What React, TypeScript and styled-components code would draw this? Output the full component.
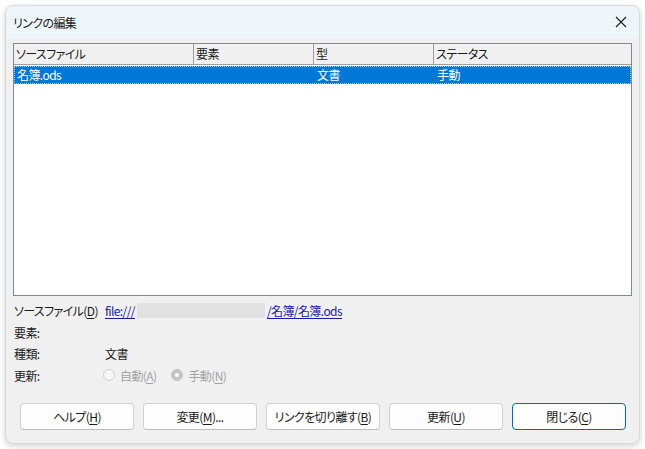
import React from 'react';
import styled, { createGlobalStyle } from 'styled-components';

const GlobalStyle = createGlobalStyle`
    html, body {
        margin: 0;
        padding: 0;
        background: #ffffff;
    }
    body {
        font-family: "Noto Sans CJK JP", "Noto Sans", sans-serif;
        font-size: 12px;
        color: #1a1a1a;
        font-feature-settings: "palt";
        letter-spacing: -0.6px;
        white-space: nowrap;
    }
`;

const Window = styled.div`
    margin: 5px;
    width: 635px;
    height: 439px;
    box-sizing: border-box;
    border-radius: 8px;
    border: 1px solid #d6d9dc;
    background: #f0f0f0;
    box-shadow: 0 2px 6px rgba(0, 0, 0, 0.18);
    overflow: hidden;
    display: flex;
    flex-direction: column;
`;

const TitleBar = styled.div`
    height: 32px;
    display: flex;
    align-items: center;
    justify-content: space-between;
    padding: 0 10px 0 7px;
    background: #eef5f9;
`;

const Title = styled.span`
    font-size: 12px;
    color: #1b1b1b;
`;

const CloseButton = styled.div`
    width: 16px;
    height: 16px;
    display: flex;
    align-items: center;
    justify-content: center;
`;

const Body = styled.div`
    flex: 1;
    display: flex;
    flex-direction: column;
    padding: 5px 7px 0 7px;
`;

const ListBox = styled.div`
    height: 253px;
    box-sizing: border-box;
    border: 1px solid #828790;
    background: #ffffff;
    display: flex;
    flex-direction: column;
`;

const HeaderRow = styled.div`
    display: grid;
    grid-template-columns: 180px 120px 120px 1fr;
    height: 20px;
    border-bottom: 1px solid #a0a0a0;
    background: #f0f0f0;
`;

const HeaderCell = styled.div<{ $last?: boolean }>`
    display: flex;
    align-items: center;
    padding-left: 2px;
    border-right: ${(p) => (p.$last ? 'none' : '1px solid #a0a0a0')};
    color: #1a1a1a;
    line-height: 1;
`;

const DataRow = styled.div<{ $selected?: boolean }>`
    display: grid;
    grid-template-columns: 180px 120px 120px 1fr;
    height: 18px;
    margin-top: 1px;
    box-sizing: border-box;
    background: ${(p) => (p.$selected ? '#0078d7' : 'transparent')};
    color: ${(p) => (p.$selected ? '#ffffff' : '#1a1a1a')};
    outline: ${(p) => (p.$selected ? '1px dotted #b8c7d8' : 'none')};
    outline-offset: -1px;
`;

const DataCell = styled.div`
    display: flex;
    align-items: center;
    padding-left: 3px;
    line-height: 1;
`;

const InfoGrid = styled.div`
    display: grid;
    grid-template-columns: 91px 1fr;
    grid-template-rows: 21px 22px 21px 22px;
    align-items: center;
    margin-top: 4px;
    padding-left: 1px;
`;

const Label = styled.span`
    color: #1a1a1a;
`;

const LinkText = styled.span`
    display: inline-flex;
    align-items: center;
    color: #1a1aa6;
    text-decoration: underline;
    text-underline-offset: 2px;
`;

const Redacted = styled.span`
    display: inline-block;
    width: 128px;
    height: 15px;
    background: #e1e1e1;
    margin: 0 2px;
`;

const RadioGroup = styled.div`
    display: flex;
    align-items: center;
    gap: 15px;
    margin-left: -2px;
`;

const RadioItem = styled.span`
    display: inline-flex;
    align-items: center;
    gap: 5px;
    color: #a3a3a3;
`;

const RadioCircle = styled.span<{ $checked?: boolean }>`
    width: 12px;
    height: 12px;
    box-sizing: border-box;
    border-radius: 50%;
    border: 1px solid ${(p) => (p.$checked ? '#c4c4c4' : '#cfcfcf')};
    background: ${(p) => (p.$checked ? '#c4c4c4' : '#f7f7f7')};
    display: inline-flex;
    align-items: center;
    justify-content: center;

    &::after {
        content: '';
        display: ${(p) => (p.$checked ? 'block' : 'none')};
        width: 4px;
        height: 4px;
        border-radius: 50%;
        background: #ffffff;
    }
`;

const U = styled.span`
    text-decoration: underline;
    text-underline-offset: 2px;
`;

const ButtonRow = styled.div`
    display: flex;
    gap: 9px;
    margin-top: 17px;
    padding: 0 6px 0 7px;
`;

const Button = styled.div<{ $default?: boolean }>`
    width: 114px;
    height: 27px;
    box-sizing: border-box;
    border-radius: 4px;
    background: #fdfdfd;
    border: 1px solid ${(p) => (p.$default ? '#0067c0' : '#d0d0d0')};
    border-bottom-color: ${(p) => (p.$default ? '#0067c0' : '#bcbcbc')};
    display: flex;
    align-items: center;
    justify-content: center;
    color: #1a1a1a;
`;

function App() {
    return (
        <>
            <GlobalStyle />
            <Window>
                <TitleBar>
                    <Title>リンクの編集</Title>
                    <CloseButton>
                        <svg width="12" height="12" viewBox="0 0 12 12">
                            <path d="M1 1 L11 11 M11 1 L1 11" stroke="#1a1a1a" strokeWidth="1.1" />
                        </svg>
                    </CloseButton>
                </TitleBar>
                <Body>
                    <ListBox>
                        <HeaderRow>
                            <HeaderCell>ソースファイル</HeaderCell>
                            <HeaderCell>要素</HeaderCell>
                            <HeaderCell>型</HeaderCell>
                            <HeaderCell $last>ステータス</HeaderCell>
                        </HeaderRow>
                        <DataRow $selected>
                            <DataCell>名簿.ods</DataCell>
                            <DataCell />
                            <DataCell>文書</DataCell>
                            <DataCell>手動</DataCell>
                        </DataRow>
                    </ListBox>
                    <InfoGrid>
                        <Label>
                            ソースファイル(<U>D</U>)
                        </Label>
                        <div>
                            <LinkText>
                                file:///
                                <Redacted />
                                /名簿/名簿.ods
                            </LinkText>
                        </div>
                        <Label>要素:</Label>
                        <div />
                        <Label>種類:</Label>
                        <span>文書</span>
                        <Label>更新:</Label>
                        <RadioGroup>
                            <RadioItem>
                                <RadioCircle />
                                <span>
                                    自動(<U>A</U>)
                                </span>
                            </RadioItem>
                            <RadioItem>
                                <RadioCircle $checked />
                                <span>
                                    手動(<U>N</U>)
                                </span>
                            </RadioItem>
                        </RadioGroup>
                    </InfoGrid>
                    <ButtonRow>
                        <Button>
                            ヘルプ(<U>H</U>)
                        </Button>
                        <Button>
                            変更(<U>M</U>)...
                        </Button>
                        <Button>
                            リンクを切り離す(<U>B</U>)
                        </Button>
                        <Button>
                            更新(<U>U</U>)
                        </Button>
                        <Button $default>
                            閉じる(<U>C</U>)
                        </Button>
                    </ButtonRow>
                </Body>
            </Window>
        </>
    );
}

export default App;
